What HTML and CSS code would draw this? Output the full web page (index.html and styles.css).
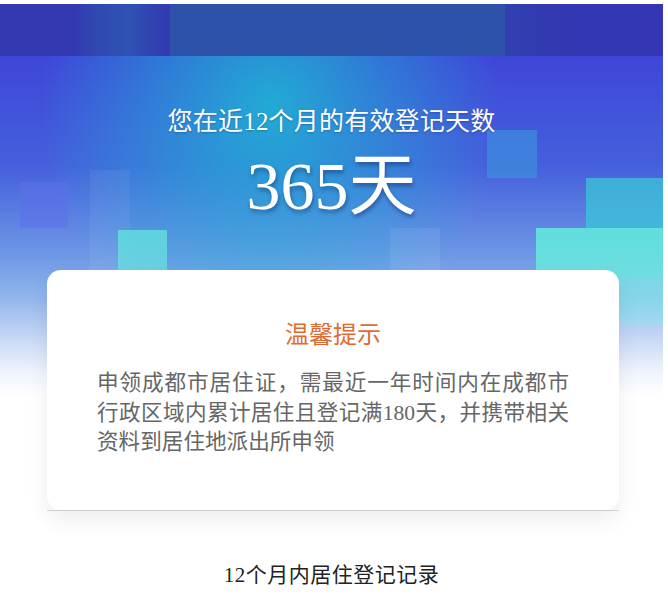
FILE: index.html
```html
<!DOCTYPE html>
<html lang="zh-CN">
  <head>
    <meta charset="utf-8" />
    <title>居住登记</title>
    <meta name="viewport" content="width=device-width, initial-scale=1.0" />
    <link rel="stylesheet" href="styles.css">
  </head>
  <body>
    <div class="page">
      <div class="topbar">
        <span class="topbar-left"></span>
        <span class="topbar-mid"></span>
        <span class="topbar-right"></span>
      </div>

      <section class="summary">
        <p class="summary-label">您在近12个月的有效登记天数</p>
        <p class="summary-days">365天</p>

        <div class="notice">
          <div class="notice-card">
            <h3 class="notice-title">温馨提示</h3>
            <p class="notice-text">
              申领成都市居住证，需最近一年时间内在成都市行政区域内累计居住且登记满180天，并携带相关资料到居住地派出所申领
            </p>
          </div>
        </div>
      </section>

      <h2 class="records-title">12个月内居住登记记录</h2>
    </div>
  </body>
</html>
```

FILE: styles.css
```css
body {
  margin: 0;
  padding: 0;
  background-color: #fff;
  font-family: "Liberation Serif", "Noto Sans CJK SC", serif;
}

.page {
  margin: 4px 5px 0 0;
}

/* dark strip along the top */
.topbar {
  display: flex;
  height: 52px;
}

.topbar-left {
  width: 170px;
  background:
    linear-gradient(90deg, rgba(255, 255, 255, 0) 0, rgba(255, 255, 255, 0) 75px,
      rgba(40, 110, 180, 0.3) 95px, rgba(40, 120, 180, 0.4) 130px,
      rgba(40, 110, 180, 0.2) 150px, rgba(40, 110, 180, 0) 170px),
    #3339b1;
}

.topbar-mid {
  width: 335px;
  background-color: #2d52a9;
}

.topbar-right {
  flex: 1;
  background: linear-gradient(90deg, #3040ae, #3337b2 40%, #3436b4);
}

/* hero block with the day count */
.summary {
  padding: 49px 0 0;
  text-align: center;
  background:
    /* decorative squares */
    linear-gradient(rgba(92, 112, 232, 0.55), rgba(92, 112, 232, 0.55)) 20px 126px / 48px 46px no-repeat,
    linear-gradient(rgba(95, 222, 222, 0.85), rgba(110, 225, 225, 0.7)) 118px 174px / 49px 49px no-repeat,
    linear-gradient(rgba(255, 255, 255, 0.05), rgba(255, 255, 255, 0.05)) 90px 114px / 40px 110px no-repeat,
    linear-gradient(rgba(60, 150, 222, 0.6), rgba(60, 150, 222, 0.6)) 487px 74px / 50px 48px no-repeat,
    linear-gradient(rgba(58, 198, 216, 0.75), rgba(58, 198, 216, 0.75)) 586px 122px / 77px 50px no-repeat,
    linear-gradient(rgba(96, 226, 220, 0.95), rgba(110, 228, 224, 0.9)) 536px 172px / 127px 50px no-repeat,
    linear-gradient(rgba(120, 228, 228, 0.8), rgba(150, 230, 236, 0.5)) 536px 222px / 127px 48px no-repeat,
    linear-gradient(rgba(255, 255, 255, 0.07), rgba(255, 255, 255, 0.07)) 390px 172px / 50px 48px no-repeat,
    /* cyan glow behind the title */
    radial-gradient(ellipse 230px 250px at 270px 50px, rgba(30, 180, 212, 0.9), rgba(30, 180, 212, 0) 100%) no-repeat,
    linear-gradient(180deg, #3e46d8 0, #4560dc 110px, #6e98e6 200px, #90b4ec 240px,
      #c4d6f4 280px, #eef3fc 315px, #fff 340px);
}

.summary-label {
  margin: 0;
  font-size: 25px;
  line-height: 34px;
  letter-spacing: 0.2px;
  color: #fff;
  text-shadow: 0 1px 2px rgba(20, 40, 110, 0.35);
}

.summary-days {
  margin: 11px 0 0;
  font-size: 68px;
  line-height: 73px;
  color: #fff;
  text-shadow: 1px 3px 4px rgba(10, 30, 90, 0.45);
}

/* tips card */
.notice {
  margin: 47px 44px 0 47px;
  border-bottom: 1px solid #dadada;
}

.notice-card {
  height: 240px;
  box-sizing: border-box;
  padding: 49px 50px 0;
  background-color: #fff;
  border-radius: 14px;
  box-shadow: 0 10px 22px rgba(0, 0, 0, 0.07);
}

.notice-title {
  margin: 0;
  font-size: 24px;
  line-height: 32px;
  font-weight: normal;
  color: #df6b33;
}

.notice-text {
  margin: 18px 0 0;
  font-size: 21.6px;
  line-height: 29.5px;
  text-align: justify;
  color: #666;
}

.records-title {
  margin: 49px 0 0;
  font-size: 21px;
  line-height: 30px;
  font-weight: normal;
  letter-spacing: 0.5px;
  text-align: center;
  color: #222;
}
```
